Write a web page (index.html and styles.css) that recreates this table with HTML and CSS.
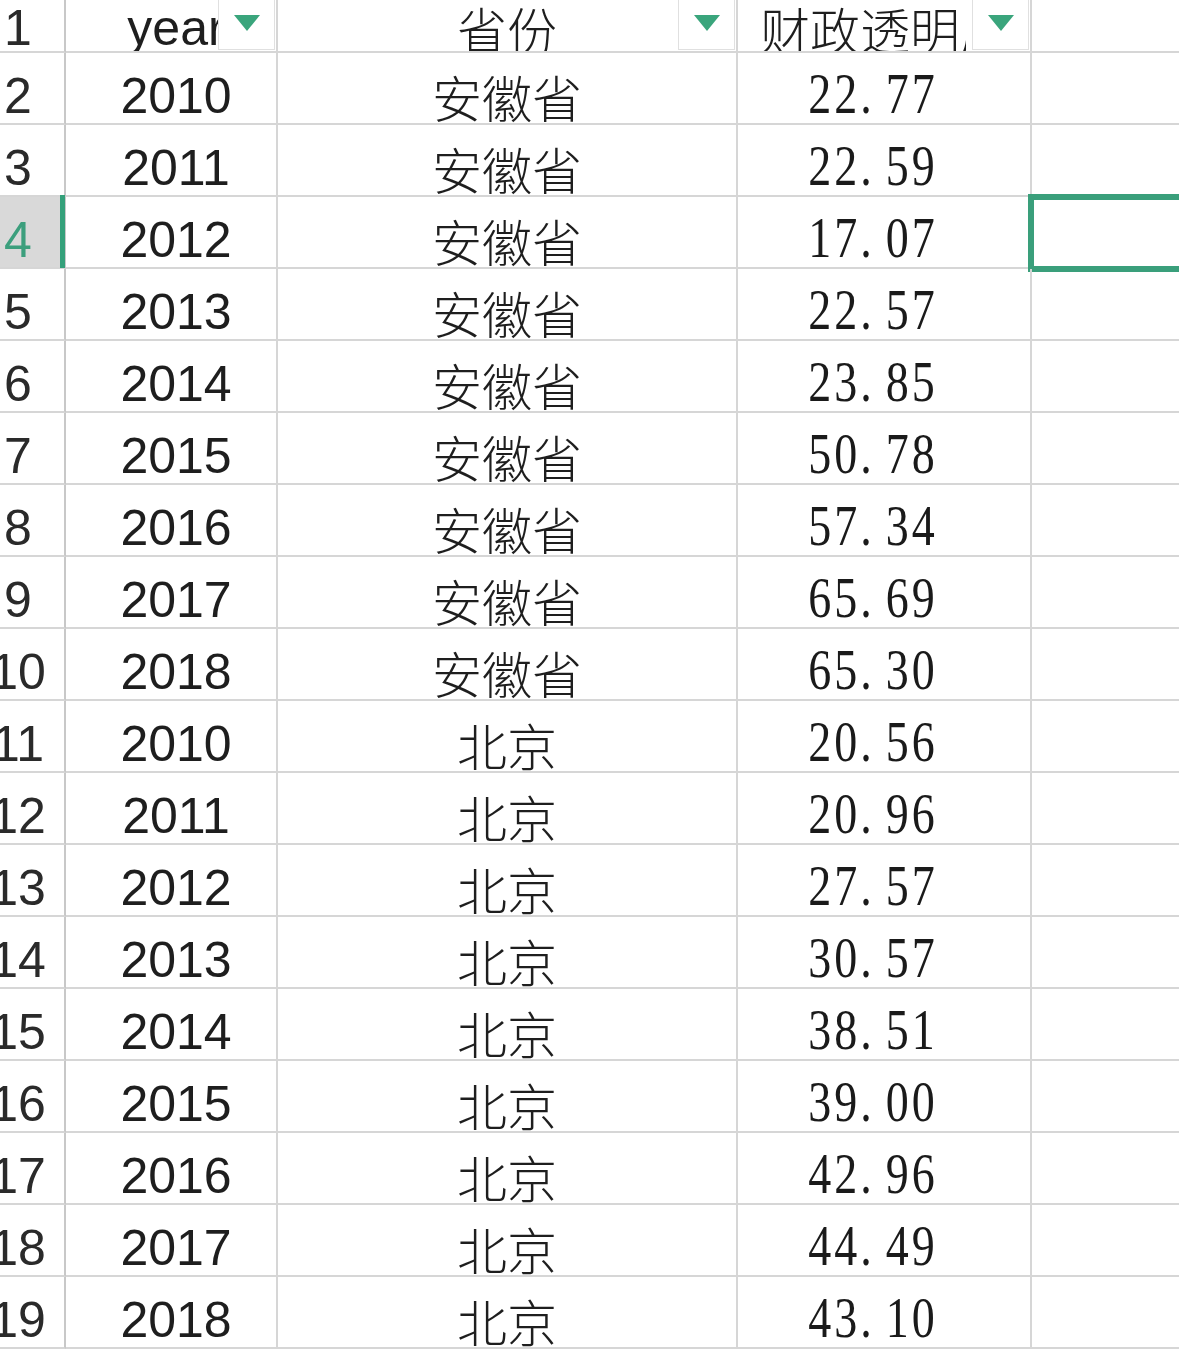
FILE: index.html
```html
<!DOCTYPE html>
<html lang="zh-CN">
<head>
<meta charset="utf-8">
<title>Sheet</title>
<link rel="stylesheet" href="styles.css">
</head>
<body>
<div class="viewport">
  <div class="grid">
    <div class="c rh hdr">1</div>
    <div class="c ca hdr">year<span class="fbtn"></span></div>
    <div class="c cb hdr">省份<span class="fbtn"></span></div>
    <div class="c cc hdr hc"><span class="clip">财政透明度</span><span class="fbtn"></span></div>
    <div class="c cd hdr"></div>

    <div class="c rh">2</div><div class="c ca">2010</div><div class="c cb">安徽省</div><div class="c cc"><span class="num">22<span class="dp">.</span>77</span></div><div class="c cd"></div>
    <div class="c rh">3</div><div class="c ca">2011</div><div class="c cb">安徽省</div><div class="c cc"><span class="num">22<span class="dp">.</span>59</span></div><div class="c cd"></div>
    <div class="c rh active">4</div><div class="c ca">2012</div><div class="c cb">安徽省</div><div class="c cc"><span class="num">17<span class="dp">.</span>07</span></div><div class="c cd"><span class="selbox"></span></div>
    <div class="c rh">5</div><div class="c ca">2013</div><div class="c cb">安徽省</div><div class="c cc"><span class="num">22<span class="dp">.</span>57</span></div><div class="c cd"></div>
    <div class="c rh">6</div><div class="c ca">2014</div><div class="c cb">安徽省</div><div class="c cc"><span class="num">23<span class="dp">.</span>85</span></div><div class="c cd"></div>
    <div class="c rh">7</div><div class="c ca">2015</div><div class="c cb">安徽省</div><div class="c cc"><span class="num">50<span class="dp">.</span>78</span></div><div class="c cd"></div>
    <div class="c rh">8</div><div class="c ca">2016</div><div class="c cb">安徽省</div><div class="c cc"><span class="num">57<span class="dp">.</span>34</span></div><div class="c cd"></div>
    <div class="c rh">9</div><div class="c ca">2017</div><div class="c cb">安徽省</div><div class="c cc"><span class="num">65<span class="dp">.</span>69</span></div><div class="c cd"></div>
    <div class="c rh">10</div><div class="c ca">2018</div><div class="c cb">安徽省</div><div class="c cc"><span class="num">65<span class="dp">.</span>30</span></div><div class="c cd"></div>
    <div class="c rh">11</div><div class="c ca">2010</div><div class="c cb">北京</div><div class="c cc"><span class="num">20<span class="dp">.</span>56</span></div><div class="c cd"></div>
    <div class="c rh">12</div><div class="c ca">2011</div><div class="c cb">北京</div><div class="c cc"><span class="num">20<span class="dp">.</span>96</span></div><div class="c cd"></div>
    <div class="c rh">13</div><div class="c ca">2012</div><div class="c cb">北京</div><div class="c cc"><span class="num">27<span class="dp">.</span>57</span></div><div class="c cd"></div>
    <div class="c rh">14</div><div class="c ca">2013</div><div class="c cb">北京</div><div class="c cc"><span class="num">30<span class="dp">.</span>57</span></div><div class="c cd"></div>
    <div class="c rh">15</div><div class="c ca">2014</div><div class="c cb">北京</div><div class="c cc"><span class="num">38<span class="dp">.</span>51</span></div><div class="c cd"></div>
    <div class="c rh">16</div><div class="c ca">2015</div><div class="c cb">北京</div><div class="c cc"><span class="num">39<span class="dp">.</span>00</span></div><div class="c cd"></div>
    <div class="c rh">17</div><div class="c ca">2016</div><div class="c cb">北京</div><div class="c cc"><span class="num">42<span class="dp">.</span>96</span></div><div class="c cd"></div>
    <div class="c rh">18</div><div class="c ca">2017</div><div class="c cb">北京</div><div class="c cc"><span class="num">44<span class="dp">.</span>49</span></div><div class="c cd"></div>
    <div class="c rh">19</div><div class="c ca">2018</div><div class="c cb">北京</div><div class="c cc"><span class="num">43<span class="dp">.</span>10</span></div><div class="c cd"></div>
  </div>
</div>
</body>
</html>
```

FILE: styles.css
```css
html, body {
  margin: 0;
  padding: 0;
  background: #ffffff;
}

.viewport {
  width: 1179px;
  height: 1350px;
  overflow: hidden;
  position: relative;
  background: #ffffff;
}

.grid {
  display: grid;
  grid-template-columns: 94px 212px 460px 294px 240px;
  grid-auto-rows: 72px;
  width: 1300px;
  margin-left: -28px;
  margin-top: -19px;
}

.c {
  box-sizing: border-box;
  position: relative;
  border-right: 2px solid #d6d6d6;
  border-bottom: 2px solid #d6d6d6;
  font-family: "Liberation Sans", "Noto Sans CJK SC", sans-serif;
  font-size: 50px;
  line-height: 56px;
  padding-top: 15px;
  text-align: center;
  color: #1e1e1e;
  white-space: nowrap;
  overflow: visible;
}

.hdr {
  padding-top: 19px;
  overflow: hidden;
}

.rh {
  color: #2a2a2a;
  border-right-color: #c8c8c8;
  background: #ffffff;
}

.rh.active {
  background: #d9d9d9;
  color: #3c9f7d;
}

.rh.active::after {
  content: "";
  position: absolute;
  right: -1px;
  top: -2px;
  bottom: -1px;
  width: 5px;
  background: #34a07a;
}

.ca {
  padding-left: 10px;
}

.cb {
  font-family: "Noto Sans CJK SC", "Liberation Sans", sans-serif;
  font-weight: 300;
}

.cb.hdr {
  font-family: "Noto Sans CJK SC", sans-serif;
}

.cc {
  padding-right: 22px;
}

.hc {
  padding-right: 0;
  padding-left: 22px;
  font-family: "Noto Sans CJK SC", sans-serif;
  font-weight: 300;
  text-align: left;
}

.clip {
  display: inline-block;
  vertical-align: top;
  width: 206px;
  overflow: hidden;
}

.num {
  display: inline-block;
  font-family: "Liberation Serif", serif;
  font-size: 46px;
  letter-spacing: 3px;
  color: #1a1a1a;
  transform: scaleY(1.22);
  transform-origin: 50% 43.5px;
}

.dp {
  margin-right: 11px;
}

.fbtn {
  position: absolute;
  right: 1px;
  bottom: 1px;
  width: 57px;
  height: 57px;
  box-sizing: border-box;
  background: #ffffff;
  border: 1px solid #e0e0e0;
}

.fbtn::after {
  content: "";
  position: absolute;
  left: 15px;
  top: 21px;
  width: 0;
  height: 0;
  border-left: 13px solid transparent;
  border-right: 13px solid transparent;
  border-top: 16px solid #3aa57c;
}

.selbox {
  position: absolute;
  left: -4px;
  top: -3px;
  bottom: -5px;
  right: -40px;
  border: 6px solid #3a9f7b;
}
```
